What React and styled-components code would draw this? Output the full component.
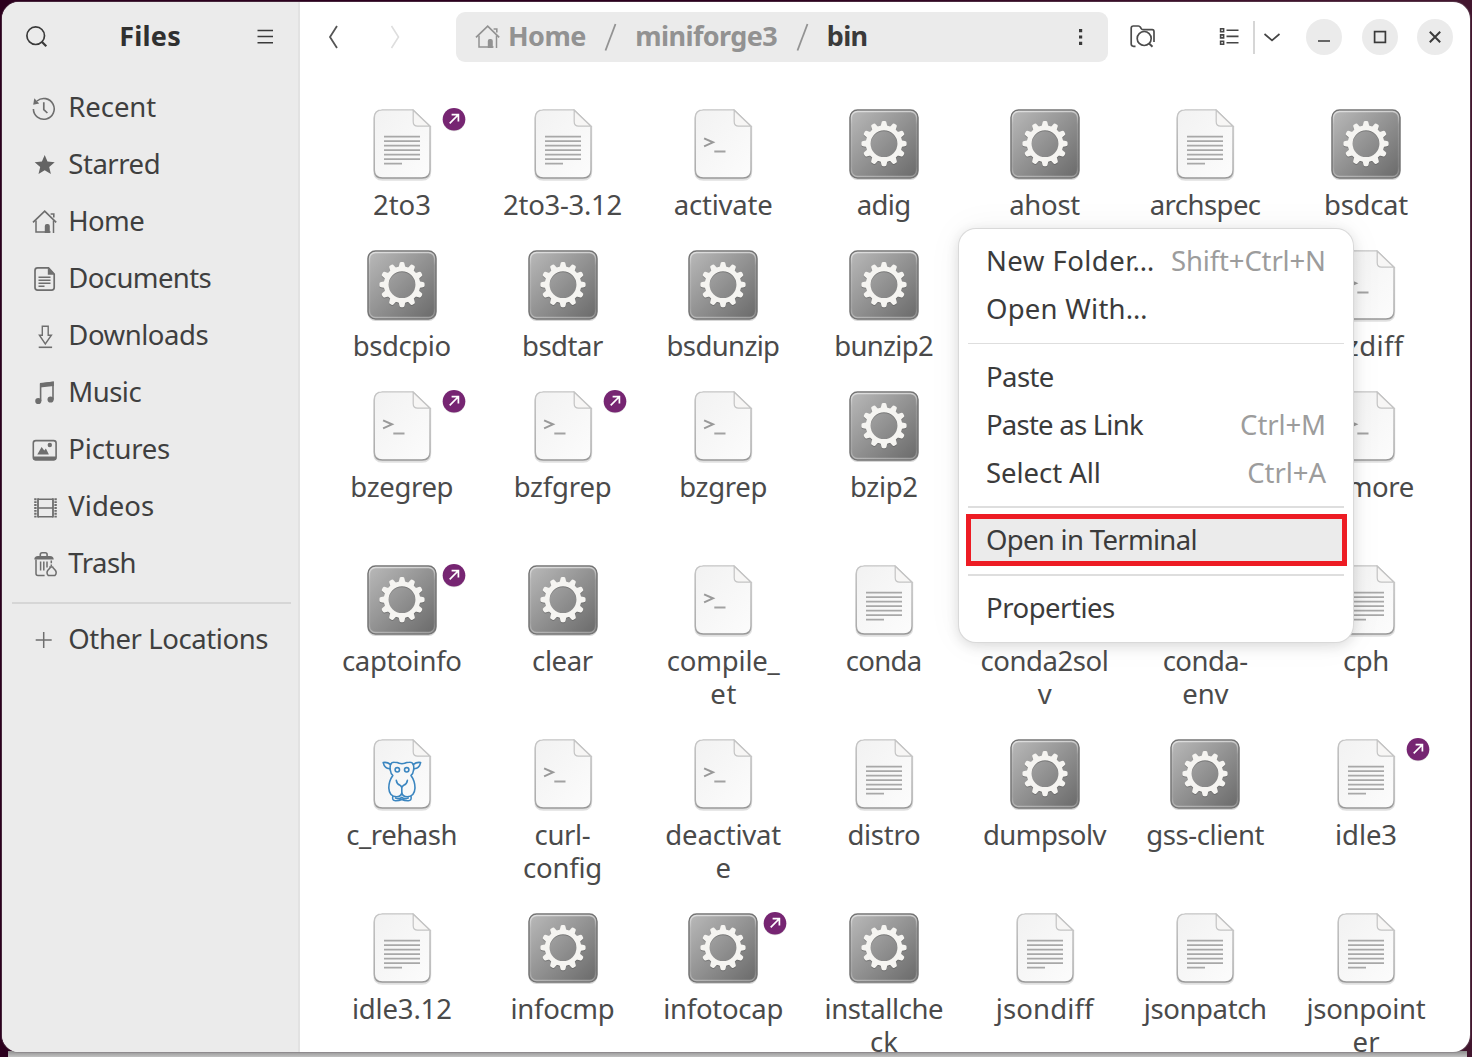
import React, { useLayoutEffect, useRef, useState } from "react";
import styled, { createGlobalStyle, css } from "styled-components";

const Global = createGlobalStyle`
  * { box-sizing: border-box; }
  html, body { margin: 0; padding: 0; overflow: hidden; }
  body { font-family: "Noto Sans", "Open Sans", sans-serif; }
`;

/* ---------- text that is tracked to a given width ---------- */

const Run = styled.span`
  display: inline-block;
  white-space: pre;
`;

function Text({ w, children }) {
  const ref = useRef(null);
  const [tracking, setTracking] = useState(0);
  useLayoutEffect(() => {
    if (!w) return;
    const natural = ref.current.getBoundingClientRect().width;
    setTracking((w + 1.8 - natural) / String(children).length);
  }, [w, children]);
  return (
    <Run ref={ref} style={{ letterSpacing: tracking, marginRight: -tracking }}>
      {children}
    </Run>
  );
}

/* ---------- desktop and window ---------- */

const Desktop = styled.div`
  width: 1472px;
  height: 1057px;
  padding: 2px 2px 5px 2px;
  background:
    linear-gradient(#8e8e8e, #c2c2c2) 8px 100% / 1459px 6px no-repeat,
    linear-gradient(90deg, #2c001e 0, #2c001e 50%, #43162f 92%, #43162f 100%);
`;

const Window = styled.div`
  display: flex;
  height: 1050px;
  border-radius: 17px;
  overflow: hidden;
  background: #fff;
  box-shadow: 0 0 0 1px rgba(120, 110, 118, 0.35);
`;

const Sidebar = styled.aside`
  width: 298px;
  flex: none;
  background: #ebebeb;
  border-right: 2px solid #e2e2e2;
`;

const SideHeader = styled.div`
  height: 70px;
  display: flex;
  align-items: center;
  justify-content: space-between;
  padding: 0 24px 0 23px;
`;

const Title = styled.div`
  padding-right: 5px;
  padding-bottom: 2px;
  font-size: 27px;
  font-weight: 700;
  line-height: 36px;
  color: #303030;
`;

const Places = styled.nav`
  padding-top: 7px;
`;

const Place = styled.div`
  height: 57px;
  display: flex;
  align-items: center;
  gap: 10.3px;
  padding-left: 30px;
  font-size: 27.5px;
  line-height: 36px;
  color: #3f3f3f;
`;

const PlaceName = styled.div`
  padding-bottom: 1px;
`;

const SideRule = styled.hr`
  border: 0;
  height: 2px;
  margin: 10px 7px 7px 10px;
  background: #d6d6d6;
`;

const Main = styled.main`
  flex: 1;
  min-width: 0;
  display: flex;
  flex-direction: column;
`;

const Toolbar = styled.header`
  height: 70px;
  flex: none;
  display: flex;
  align-items: center;
  padding-left: 21px;
`;

const ToolIcon = styled.div`
  width: ${(p) => p.$w}px;
  margin-left: ${(p) => p.$gap || 0}px;
  display: flex;
  align-items: center;
  justify-content: center;
`;

const PathBar = styled.div`
  width: 652px;
  height: 50px;
  margin-left: 47px;
  padding: 0 21px 0 19px;
  display: flex;
  align-items: center;
  border-radius: 9px;
  background: #ebebeb;
  font-size: 27px;
  line-height: 36px;
  font-weight: 700;
  color: #929292;
`;

const Crumb = styled.span`
  padding-left: ${(p) => p.$pad}px;
  padding-bottom: 2px;
  color: ${(p) => (p.$current ? "#3a3a3a" : "inherit")};
`;

const Slash = styled.svg`
  margin-left: ${(p) => p.$gap}px;
`;

const Spacer = styled.div`
  flex: 1;
`;

const Divider = styled.div`
  width: 2px;
  height: 33px;
  margin-left: 13px;
  background: #d6d6d6;
`;

const RoundButton = styled.div`
  width: 36px;
  height: 36px;
  margin-left: ${(p) => p.$gap}px;
  border-radius: 50%;
  background: #ebebeb;
  display: flex;
  align-items: center;
  justify-content: center;
`;

/* ---------- file grid ---------- */

const Grid = styled.section`
  flex: 1;
  min-height: 0;
  overflow: hidden;
  display: grid;
  grid-template-columns: repeat(7, 160.7px);
  grid-auto-rows: max-content;
  row-gap: 36px;
  padding: 37px 0 0 21.6px;
`;

const File = styled.div`
  display: flex;
  flex-direction: column;
  align-items: center;
`;

const Thumb = styled.div`
  position: relative;
  width: 72px;
  height: 72px;
`;

const Badge = styled.svg`
  position: absolute;
  left: 76px;
  top: -2px;
`;

const Label = styled.div`
  padding-top: 7px;
  margin-bottom: -7px;
  height: ${(p) => p.$lines * 33 + 7}px;
  display: flex;
  flex-direction: column;
  align-items: center;
  font-size: 27.5px;
  line-height: 33px;
  color: #4a4a4a;
`;

/* ---------- context menu ---------- */

const Menu = styled.div`
  position: absolute;
  left: 959px;
  top: 229px;
  width: 394px;
  height: 413px;
  padding: 8px 9px;
  border-radius: 17px;
  background: #fff;
  box-shadow: 0 0 0 1px #d9d9d9, 0 3px 14px rgba(0, 0, 0, 0.14), 0 0 36px rgba(0, 0, 0, 0.05);
`;

const MenuItem = styled.div`
  position: relative;
  height: 48px;
  display: flex;
  align-items: center;
  justify-content: space-between;
  padding: 0 18px 0 18px;
  font-size: 27.5px;
  line-height: 36px;
  color: #3b3b3b;
  ${(p) =>
    p.$active &&
    css`
      background: #ebebeb;
      &::after {
        content: "";
        position: absolute;
        left: -2px;
        right: -3px;
        top: -2px;
        bottom: -2px;
        border: 5px solid #ed1c24;
      }
    `}
`;

const Shortcut = styled.span`
  color: #9c9c9c;
`;

const MenuRule = styled.hr`
  border: 0;
  height: 1.5px;
  margin: 9.8px 0 8.4px;
  background: #dedede;
`;

/* ---------- drawings ---------- */

const stroke = (color, width) => ({ fill: "none", stroke: color, strokeWidth: width });
const G = "#6e6e6e";

const HomeDrawing = ({ color }) => (
  <g>
    <path d="M1 13.4 12.7 2.2 24.2 13.4" {...stroke(color, 1.7)} />
    <path d="M4 11.5V23H18.5M21.5 11.5V24" {...stroke(color, 1.5)} />
    <path d="M12.8 24V17q0-2 2-2h1q2 0 2 2v7z" fill={color} />
    <path d="M18.6 5h3.2v3.6" {...stroke(color, 1.6)} />
  </g>
);

const placeDrawings = {
  recent: (
    <g>
      <path d="M1.4 14A10.4 10.4 0 1 0 5 6" {...stroke(G, 1.6)} />
      <path d="M2.3 3.3 1.2 9.8l6-1.2z" fill={G} />
      <path d="M11.8 7.2v7.4l3.6 3.4" {...stroke(G, 1.7)} />
    </g>
  ),
  starred: (
    <path
      d="M12.7 2.9 15.5 9.6 22.7 10.200 17.2 14.9 18.9 22 12.7 18.200 6.5 22 8.2 14.9 2.7 10.200 9.9 9.6Z"
      fill="#646464"
    />
  ),
  home: <HomeDrawing color={G} />,
  documents: (
    <g>
      <path d="M6 1.9h10.5l5.7 6.3V21.6q0 2.6-2.6 2.6H5.6Q3 24.200 3 21.600V4.500Q3 1.900 5.600 1.900Z" {...stroke(G, 1.7)} />
      <path d="M15.800 2v6.700h6.500z" fill={G} />
      <path d="M6.500 11.200h12M6.500 14.200h12M6.500 17.200h12M6.500 20.200h6" {...stroke(G, 1.4)} />
    </g>
  ),
  downloads: (
    <g>
      <path d="M10.300 3.300h5.900v8.900h3.200L13.300 21 7.400 12.200h2.900z" {...stroke(G, 1.400)} />
      <path d="M6.700 24.300h13.400" {...stroke(G, 1.600)} />
    </g>
  ),
  music: (
    <g>
      <circle cx="6.300" cy="21" r="3.100" fill={G} />
      <circle cx="18.600" cy="19.500" r="3.100" fill={G} />
      <path d="M8.600 21V4.200L21 2.500v17" {...stroke(G, 1.600)} />
      <path d="M8 3 21.800 1.500V6L8 7.600z" fill={G} />
    </g>
  ),
  pictures: (
    <g>
      <rect x="1.300" y="3.600" width="22.800" height="19.200" rx="2.500" {...stroke(G, 1.600)} />
      <path d="M1.300 19.500h22.800v1.800q0 2.200-2.200 2.200H3.500q-2.200 0-2.200-2.200z" fill={G} />
      <path d="M5.300 17.500 9.600 10l2.700 3.600 1.600-2 3 5.900z" fill={G} />
      <circle cx="17.800" cy="8" r="2.200" fill={G} />
    </g>
  ),
  videos: (
    <g>
      <path d="M6 5.200h15M6 14h15M6 22.800h15" {...stroke(G, 1.500)} />
      <path d="M6 4.300v19.300M21 4.300v19.300" {...stroke(G, 1.800)} />
      <path d="M3.400 4.300v19.500M23.600 4.300v19.500" {...stroke(G, 2.400)} strokeDasharray="1.900 1" />
    </g>
  ),
  trash: (
    <g>
      <path d="M8.300 5.200V3.600q0-1.800 1.800-1.800h3.200q1.800 0 1.800 1.800v1.600" {...stroke(G, 1.600)} />
      <path d="M2.300 8.600q0-3.700 3.700-3.700h12q3.700 0 3.700 3.700z" fill={G} />
      <path d="M4 8.600v14q0 2 2 2h6.600" {...stroke(G, 1.500)} />
      <path d="M8.600 10.500v9M11.800 10.500v9M15 10.500v6M19.300 9.500v2.800M19.300 13.500v2" {...stroke(G, 1.500)} />
      <path d="M17.300 16h4M18.400 16.500l-2.700 3q-1.600 2.600.6 5h6.600q2.200-2.400.6-5l-2.700-3" {...stroke(G, 1.500)} />
    </g>
  ),
  other: <path d="M11.700 5v16M3.700 13h16" {...stroke(G, 1.500)} />,
};

const PageShape = () => (
  <g>
    <path
      d="M14.500 1.500H47L64 17.600V62q0 8-8 8H16.500q-8 0-8-8V9.500q0-8 8-8Z"
      fill="none"
      stroke="#000"
      strokeOpacity="0.12"
      strokeWidth="2.500"
      transform="translate(0 0.600)"
    />
    <path
      d="M15.500 0.900H47L64 17.200V61q0 8-8 8H16.300q-8 0-8-8V8.900q0-8 8-8Z"
      fill="url(#page)"
      stroke="url(#pageEdge)"
      strokeWidth="1.400"
    />
    <path d="M47.200 1.200V12.800q0 4.400 4.400 4.400H64Z" fill="#f7f6f5" stroke="#c4c4c4" strokeWidth="1.200" />
  </g>
);

const TextPage = () => (
  <g>
    <PageShape />
    <path
      d="M18 27.700h36M18 32.200h36M18 36.700h36M18 41.200h36M18 45.700h36M18 50.200h36M18 54.700h18"
      {...stroke("#a8a8a8", 1.700)}
    />
  </g>
);

const ScriptPage = () => (
  <g>
    <PageShape />
    <path d="M17.100 29.300 26 33.300 17.100 37.300" {...stroke("#999", 2)} />
    <path d="M27.300 42.500h11.200" {...stroke("#a2a2a2", 2)} />
  </g>
);

const CamelPage = () => (
  <g>
    <PageShape />
    <g {...stroke("#3b86c0", 1.600)} strokeLinejoin="round" strokeLinecap="round">
      <path d="M24.600 25.500Q21 22.800 17.200 23.600 18.500 29.300 23.600 29.800M47.200 25.500Q51 22.800 54.600 23.600 53.400 29.300 48.300 29.800" />
      <path d="M24.300 31Q23.200 23 28.300 23.200 31.500 23.200 33.300 24.300 36 25.200 38.600 24.300 40.500 23.200 43.500 23.200 48.700 23 47.600 31" />
      <path d="M24.300 31Q24.800 35 26.800 36.500 22.800 42 22.800 49 23.200 57.500 30.500 57.800 35 57.500 35.800 54 36.600 57.500 41.200 57.800 48.600 57.500 49 49 49 42 45 36.500 47.100 35 47.600 31" />
      <path d="M30.300 41.300Q30.800 45 34 46.300 35.800 47.300 35.800 49V54.500M41.400 41.300Q40.900 45 37.700 46.300 35.800 47.300 35.800 49" />
      <path d="M26.800 57.500Q25.800 61.600 29.500 61.800 33 61.900 35.800 60.600 38.600 61.900 42.300 61.800 46 61.600 45 57.500M29.500 58.900Q33.500 60.400 35.800 58.300 38.100 60.400 42.200 58.900" />
      <circle cx="31.300" cy="30.800" r="2.200" />
      <circle cx="40.700" cy="30.800" r="2.200" />
    </g>
  </g>
);

const teeth = Array.from({ length: 12 }, (_, i) => i * 30);

const GearShape = ({ fill, opacity }) => (
  <g fill={fill} opacity={opacity}>
    <circle cx="36" cy="34.700" r="15.800" fill="none" stroke={fill} strokeWidth="4.800" />
    {teeth.map((a) => (
      <path
        key={a}
        d="M31.900 18.200Q33 17.200 33.400 13.900 33.600 12.100 35 12.100H37Q38.400 12.100 38.600 13.900 39 17.200 40.100 18.200Z"
        transform={`rotate(${a} 36 34.700)`}
      />
    ))}
  </g>
);

const Program = () => (
  <g>
    <rect x="1.500" y="2" width="69" height="69" rx="8" fill="#000" opacity="0.160" />
    <rect x="2" y="1" width="68" height="68" rx="7.500" fill="url(#metal)" stroke="#747474" strokeWidth="1.400" />
    <rect x="3.500" y="2.500" width="65" height="65" rx="6" fill="none" stroke="url(#metalEdge)" strokeWidth="1.300" />
    <g transform="translate(0 1)">
      <GearShape fill="#555" opacity="0.450" />
    </g>
    <GearShape fill="#f5f4f1" />
  </g>
);

const drawings = { text: TextPage, script: ScriptPage, camel: CamelPage, program: Program };

const GradientDefs = styled.svg`
  position: absolute;
`;

const Gradients = () => (
  <GradientDefs width="0" height="0">
    <defs>
      <linearGradient id="page" x1="0" y1="0" x2="1" y2="1">
        <stop offset="0" stopColor="#f2f2f2" />
        <stop offset="1" stopColor="#fcfcfc" />
      </linearGradient>
      <linearGradient id="pageEdge" x1="0" y1="0" x2="0" y2="1">
        <stop offset="0" stopColor="#c6c6c6" />
        <stop offset="0.900" stopColor="#adadad" />
        <stop offset="1" stopColor="#979797" />
      </linearGradient>
      <linearGradient id="metal" x1="0" y1="0" x2="1" y2="1">
        <stop offset="0" stopColor="#bababa" />
        <stop offset="1" stopColor="#696969" />
      </linearGradient>
      <linearGradient id="metalEdge" x1="0" y1="0" x2="0" y2="1">
        <stop offset="0" stopColor="#fff" stopOpacity="0.550" />
        <stop offset="0.200" stopColor="#fff" stopOpacity="0.140" />
        <stop offset="0.850" stopColor="#fff" stopOpacity="0.120" />
        <stop offset="1" stopColor="#fff" stopOpacity="0.350" />
      </linearGradient>
    </defs>
  </GradientDefs>
);

/* ---------- content ---------- */

const places = [
  ["recent", "Recent", 86],
  ["starred", "Starred", 90],
  ["home", "Home", 74],
  ["documents", "Documents", 141],
  ["downloads", "Downloads", 138],
  ["music", "Music", 71],
  ["pictures", "Pictures", 100],
  ["videos", "Videos", 84],
  ["trash", "Trash", 66],
];

const T = "text";
const S = "script";
const P = "program";

const files = [
  [T, [["2to3", 56]], 1],
  [T, [["2to3-3.12", 117]]],
  [S, [["activate", 97]]],
  [P, [["adig", 52]]],
  [P, [["ahost", 69]]],
  [T, [["archspec", 109]]],
  [P, [["bsdcat", 82]]],
  [P, [["bsdcpio", 96]]],
  [P, [["bsdtar", 79]]],
  [P, [["bsdunzip", 111]]],
  [P, [["bunzip2", 97]]],
  [P, [["bzcat", 66]]],
  [S, [["bzcmp", 82]], 1],
  [S, [["bzdiff", 73]]],
  [S, [["bzegrep", 101]], 1],
  [S, [["bzfgrep", 96]], 1],
  [S, [["bzgrep", 86]]],
  [P, [["bzip2", 66]]],
  [P, [["bzip2reco", 122], ["ver", 40]]],
  [S, [["bzless", 76]], 1],
  [S, [["bzmore", 94]]],
  [P, [["captoinfo", 118]], 1],
  [P, [["clear", 59]]],
  [S, [["compile_", 111], ["et", 25]]],
  [T, [["conda", 74]]],
  [T, [["conda2sol", 126], ["v", 12]]],
  [T, [["conda-", 83], ["env", 44]]],
  [T, [["cph", 44]]],
  ["camel", [["c_rehash", 109]]],
  [S, [["curl-", 54], ["config", 77]]],
  [S, [["deactivat", 114], ["e", 13]]],
  [T, [["distro", 71]]],
  [P, [["dumpsolv", 121]]],
  [P, [["gss-client", 116]]],
  [T, [["idle3", 60]], 1],
  [T, [["idle3.12", 98]]],
  [P, [["infocmp", 102]]],
  [P, [["infotocap", 118]], 1],
  [P, [["installche", 117], ["ck", 26]]],
  [T, [["jsondiff", 96]]],
  [T, [["jsonpatch", 121]]],
  [T, [["jsonpoint", 117], ["er", 26]]],
];

const menu = [
  { text: "New Folder…", w: 167, keys: "Shift+Ctrl+N", kw: 153 },
  { text: "Open With…", w: 160 },
  null,
  { text: "Paste", w: 66 },
  { text: "Paste as Link", w: 155, keys: "Ctrl+M", kw: 84 },
  { text: "Select All", w: 113, keys: "Ctrl+A", kw: 77 },
  null,
  { text: "Open in Terminal", w: 209, active: true },
  null,
  { text: "Properties", w: 127 },
];

function FileItem({ kind, lines, link }) {
  const Drawing = drawings[kind];
  return (
    <File>
      <Thumb>
        <svg width="72" height="74" viewBox="0 0 72 74">
          <Drawing />
        </svg>
        {link ? (
          <Badge width="24" height="25" viewBox="0 0 24 25">
            <circle cx="12" cy="13" r="11.300" fill="#000" opacity="0.150" />
            <circle cx="12" cy="12.200" r="11.300" fill="#762572" />
            <path d="M7.700 16.300 16 8M9.600 7.600h6.800v6.800" {...stroke("#fff", 1.700)} />
          </Badge>
        ) : null}
      </Thumb>
      <Label $lines={lines.length}>
        {lines.map(([s, w]) => (
          <Text key={s} w={w}>{s}</Text>
        ))}
      </Label>
    </File>
  );
}

function PlaceItem({ icon, text, w }) {
  return (
    <Place>
      <svg width="26" height="26" viewBox="0 0 26 26">{placeDrawings[icon]}</svg>
      <PlaceName><Text w={w}>{text}</Text></PlaceName>
    </Place>
  );
}

export default function App() {
  const ink = "#3a3a3a";
  return (
    <>
      <Global />
      <Gradients />
      <Desktop>
        <Window>
          <Sidebar>
            <SideHeader>
              <svg width="24" height="24" viewBox="0 0 24 24">
                <circle cx="10.700" cy="10.700" r="8.800" {...stroke(ink, 1.700)} />
                <path d="M16.800 16.800 21.300 21.300" {...stroke(ink, 2.200)} />
              </svg>
              <Title><Text w={60}>Files</Text></Title>
              <svg width="18" height="18" viewBox="0 0 18 18">
                <path d="M1.500 2.500h15.500M1.500 8.500h15.500M1.500 14.800h15.500" {...stroke(ink, 1.600)} />
              </svg>
            </SideHeader>
            <Places>
              {places.map(([icon, text, w]) => (
                <PlaceItem key={icon} icon={icon} text={text} w={w} />
              ))}
              <SideRule />
              <PlaceItem icon="other" text="Other Locations" w={198} />
            </Places>
          </Sidebar>
          <Main>
            <Toolbar>
              <ToolIcon $w={24}>
                <svg width="12" height="26" viewBox="0 0 12 26">
                  <path d="M10 2 3 13l7 11" {...stroke("#555", 1.800)} />
                </svg>
              </ToolIcon>
              <ToolIcon $w={24} $gap={40}>
                <svg width="12" height="26" viewBox="0 0 12 26">
                  <path d="M0.500 2 7.500 13 0.500 24" {...stroke("#dedede", 1.600)} />
                </svg>
              </ToolIcon>
              <PathBar>
                <svg width="26" height="26" viewBox="0 0 26 26"><HomeDrawing color="#929292" /></svg>
                <Crumb $pad={7}><Text w={76}>Home</Text></Crumb>
                <Slash $gap={17} width="14" height="30" viewBox="0 0 14 30">
                  <path d="M12.500 2 2.500 28.500" {...stroke("#929292", 1.800)} />
                </Slash>
                <Crumb $pad={18}><Text w={140}>miniforge3</Text></Crumb>
                <Slash $gap={17} width="14" height="30" viewBox="0 0 14 30">
                  <path d="M12.500 2 2.500 28.500" {...stroke("#929292", 1.800)} />
                </Slash>
                <Crumb $pad={18} $current><Text w={39}>bin</Text></Crumb>
                <Spacer />
                <svg width="12" height="20" viewBox="0 0 12 20">
                  <path d="M4 2h3.200v3.200H4zM4 8.400h3.200v3.200H4zM4 14.800h3.200V18H4z" fill={ink} />
                </svg>
              </PathBar>
              <ToolIcon $w={28} $gap={20}>
                <svg width="28" height="26" viewBox="0 0 28 26">
                  <path
                    d="M7.500 22.300H5.500Q3.200 22.300 3.200 20V4.200Q3.200 2 5.400 2h5q1.300 0 2 1.200l.8 1.400q.6 1 1.800 1h9.200Q26 5.600 26 7.800V18"
                    {...stroke("#4c4c4c", 1.700)}
                  />
                  <circle cx="16.200" cy="14.500" r="7" {...stroke("#4c4c4c", 1.700)} />
                  <path d="M20.800 19.300 24.500 22.800" {...stroke("#4c4c4c", 2)} />
                </svg>
              </ToolIcon>
              <ToolIcon $w={22} $gap={62}>
                <svg width="22" height="20" viewBox="0 0 22 20">
                  <path
                    d="M2.600 1.700h3v3h-3zM2.600 7.900h3v3h-3zM2.600 14.200h3v3h-3zM8.500 3.200h12M8.500 9.400h12M8.500 15.700h12"
                    {...stroke("#454545", 1.600)}
                  />
                </svg>
              </ToolIcon>
              <Divider />
              <ToolIcon $w={18} $gap={7.5}>
                <svg width="18" height="12" viewBox="0 0 18 12">
                  <path d="M1.500 3 9 9.300l7.500-6.300" {...stroke("#454545", 1.700)} />
                </svg>
              </ToolIcon>
              <RoundButton $gap={25.5}>
                <svg width="14" height="14" viewBox="0 0 14 14">
                  <path d="M1 11h12" {...stroke(ink, 1.700)} />
                </svg>
              </RoundButton>
              <RoundButton $gap={19.7}>
                <svg width="14" height="14" viewBox="0 0 14 14">
                  <rect x="1.600" y="1.600" width="10.800" height="10.800" {...stroke(ink, 1.700)} />
                </svg>
              </RoundButton>
              <RoundButton $gap={19.5}>
                <svg width="14" height="14" viewBox="0 0 14 14">
                  <path d="M1.800 1.800 12.200 12.200M12.200 1.800 1.800 12.200" {...stroke(ink, 2)} />
                </svg>
              </RoundButton>
            </Toolbar>
            <Grid>
              {files.map(([kind, lines, link]) => (
                <FileItem key={lines[0][0]} kind={kind} lines={lines} link={link} />
              ))}
            </Grid>
          </Main>
        </Window>
        <Menu>
          {menu.map((item, i) =>
            item ? (
              <MenuItem key={item.text} $active={item.active}>
                <Text w={item.w}>{item.text}</Text>
                {item.keys && <Shortcut><Text w={item.kw}>{item.keys}</Text></Shortcut>}
              </MenuItem>
            ) : (
              <MenuRule key={i} />
            )
          )}
        </Menu>
      </Desktop>
    </>
  );
}
